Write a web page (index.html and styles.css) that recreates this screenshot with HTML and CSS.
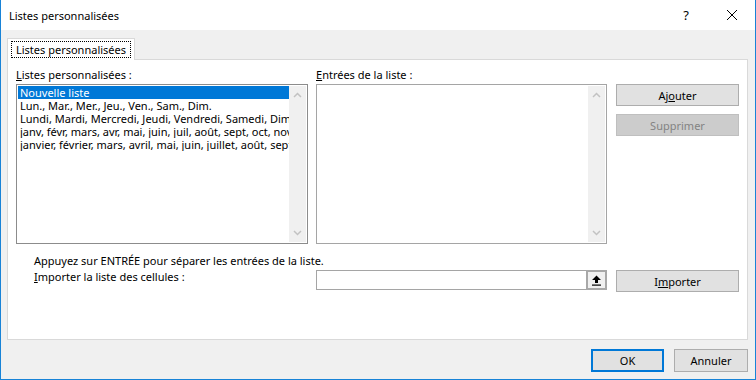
FILE: index.html
```html
<!DOCTYPE html>
<html lang="fr">
<head>
  <meta charset="UTF-8" />
  <title>Listes personnalisées</title>
  <link rel="stylesheet" href="styles.css">
</head>
<body>
  <div class="dialog">
    <div class="titlebar">
      <span class="title">Listes personnalisées</span>
      <div class="title-controls">
        <span class="help">?</span>
        <svg class="close" width="12" height="12" viewBox="0 0 12 12">
          <path d="M1 1 L11 11 M11 1 L1 11" stroke="#000" stroke-width="1" fill="none"/>
        </svg>
      </div>
    </div>

    <div class="client">
      <div class="tabs">
        <div class="tab"><span class="tab-label">Listes personnalisées</span></div>
      </div>

      <div class="panel">
        <div class="grid">
          <div class="field-label"><u>L</u>istes personnalisées :</div>
          <div class="field-label"><u>E</u>ntrées de la liste :</div>
          <div></div>

          <div class="listbox">
            <ul class="items">
              <li class="selected">Nouvelle liste</li>
              <li>Lun., Mar., Mer., Jeu., Ven., Sam., Dim.</li>
              <li>Lundi, Mardi, Mercredi, Jeudi, Vendredi, Samedi, Dimanche</li>
              <li>janv, févr, mars, avr, mai, juin, juil, août, sept, oct, nov, déc</li>
              <li>janvier, février, mars, avril, mai, juin, juillet, août, septembre, octobre</li>
            </ul>
            <div class="scrollbar">
              <svg width="9" height="6" viewBox="0 0 9 6"><path d="M1 5 L4.5 1.5 L8 5" stroke="#c2c2c2" stroke-width="1.5" fill="none"/></svg>
              <svg width="9" height="6" viewBox="0 0 9 6"><path d="M1 1 L4.5 4.5 L8 1" stroke="#c2c2c2" stroke-width="1.5" fill="none"/></svg>
            </div>
          </div>

          <div class="listbox entries">
            <div class="items"></div>
            <div class="scrollbar">
              <svg width="9" height="6" viewBox="0 0 9 6"><path d="M1 5 L4.5 1.5 L8 5" stroke="#c2c2c2" stroke-width="1.5" fill="none"/></svg>
              <svg width="9" height="6" viewBox="0 0 9 6"><path d="M1 1 L4.5 4.5 L8 1" stroke="#c2c2c2" stroke-width="1.5" fill="none"/></svg>
            </div>
          </div>

          <div class="side-buttons">
            <button class="btn">Aj<u>o</u>uter</button>
            <button class="btn" disabled>Supprimer</button>
          </div>

          <p class="hint">Appuyez sur ENTRÉE pour séparer les entrées de la liste.</p>

          <div class="import-label"><u>I</u>mporter la liste des cellules :</div>
          <div class="import-field">
            <div class="import-input"></div>
            <span class="pick">
              <svg width="11" height="11" viewBox="0 0 11 11">
                <path d="M5.5 0.5 L10 5 L7 5 L7 8 L4 8 L4 5 L1 5 Z" fill="#000"/>
                <rect x="1" y="9.5" width="9" height="1.2" fill="#000"/>
              </svg>
            </span>
          </div>
          <button class="btn import-btn">I<u>m</u>porter</button>
        </div>
      </div>

      <div class="footer">
        <button class="btn ok">OK</button>
        <button class="btn cancel">Annuler</button>
      </div>
    </div>
  </div>
</body>
</html>
```

FILE: styles.css
```css
* {
  box-sizing: border-box;
}
body {
  margin: 0;
  font-family: 'Noto Sans', 'Liberation Sans', sans-serif;
  font-size: 11px;
  color: #000;
  background: #fff;
}
u {
  text-decoration: underline;
  text-underline-offset: 1px;
}
.dialog {
  width: 756px;
  height: 380px;
  border: 1px solid #1883d7;
  border-top: none;
  display: flex;
  flex-direction: column;
}
.titlebar {
  height: 30px;
  background: #fff;
  display: flex;
  align-items: center;
  justify-content: space-between;
  padding-left: 8px;
}
.title {
  line-height: 15px;
}
.title-controls {
  display: flex;
  align-items: center;
}
.help {
  width: 46px;
  text-align: center;
  font-size: 13px;
}
.close {
  width: 46px;
  height: 12px;
  padding: 0 17px;
}
.client {
  flex: 1;
  background: #f0f0f0;
  padding: 8px 0 0 6px;
}
.tabs {
  display: flex;
}
.tab {
  position: relative;
  z-index: 1;
  width: 128px;
  height: 22px;
  margin-bottom: -1px;
  background: #fff;
  border: 1px solid #d9d9d9;
  border-bottom: none;
  padding: 2px 0 0 3px;
  white-space: nowrap;
}
.tab-label {
  display: inline-block;
  border: 1px dotted #000;
  padding: 0 4px;
  line-height: 15px;
}
.panel {
  width: 741px;
  height: 281px;
  background: #fff;
  border: 1px solid #d9d9d9;
  padding: 7px 0 0 8px;
}
.grid {
  display: grid;
  grid-template-columns: 300px 300px 123px;
}
.field-label {
  line-height: 15px;
  margin-bottom: 2px;
}
.listbox {
  width: 292px;
  height: 160px;
  border: 1px solid #8c8c8c;
  padding: 1px;
  display: flex;
}
.listbox.entries {
  width: 291px;
  border-color: #a5a5a5;
}
.items {
  flex: 1;
  min-width: 0;
  margin: 0;
  padding: 0;
  list-style: none;
  overflow: hidden;
}
.items li {
  line-height: 13px;
  padding-left: 2px;
  white-space: nowrap;
  overflow: hidden;
}
.items li.selected {
  background: #0078d7;
  color: #fff;
}
.scrollbar {
  width: 17px;
  background: #f0f0f0;
  display: flex;
  flex-direction: column;
  justify-content: space-between;
  align-items: center;
  padding: 6px 0 6px;
}
.side-buttons {
  display: flex;
  flex-direction: column;
  gap: 8px;
}
.btn {
  font: inherit;
  color: #000;
  height: 22px;
  background: #e1e1e1;
  border: 1px solid #adadad;
  padding: 0;
  width: 123px;
}
.btn:disabled {
  background: #cccccc;
  border-color: #bfbfbf;
  color: #838383;
}
.hint {
  grid-column: 1 / -1;
  margin: 9px 0 0;
  padding-left: 18px;
  line-height: 16px;
}
.import-label {
  padding-left: 18px;
  line-height: 16px;
}
.import-field {
  margin-top: 1px;
  width: 291px;
  height: 20px;
  border: 1px solid #a5a5a5;
  display: flex;
}
.import-input {
  flex: 1;
  background: #fff;
}
.pick {
  width: 21px;
  height: 20px;
  margin: -1px -1px 0 0;
  background: #f0f0f0;
  border: 2px solid #a8a8a8;
  display: flex;
  align-items: center;
  justify-content: center;
}
.import-btn {
  margin-top: 1px;
}
.footer {
  display: flex;
  justify-content: flex-end;
  gap: 10px;
  margin-top: 9px;
  padding-right: 7px;
}
.footer .btn {
  height: 23px;
  width: 74px;
}
.footer .ok {
  width: 73px;
  border: 2px solid #0078d7;
}
```
